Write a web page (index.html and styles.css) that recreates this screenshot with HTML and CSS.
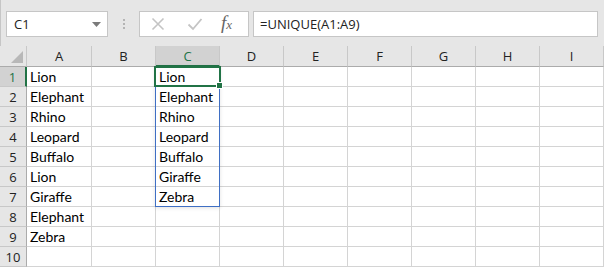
FILE: index.html
```html
<!DOCTYPE html>
<html lang="en">
<head>
    <meta charset="UTF-8">
    <title>UNIQUE function</title>
    <link rel="stylesheet" href="styles.css">
</head>
<body>
    <div class="toolbar">
        <div class="name-box">
            <span>C1</span>
            <svg class="caret" width="9" height="5" viewBox="0 0 9 5"><path d="M0 0h9L4.5 5z" fill="#7a7a7a"/></svg>
        </div>
        <div class="grip"><i></i><i></i><i></i></div>
        <div class="fx-buttons">
            <svg width="14" height="14" viewBox="0 0 14 14"><path d="M1.5 1.5l11 11M12.5 1.5l-11 11" stroke="#c4c4c4" stroke-width="1.6" fill="none"/></svg>
            <svg width="16" height="14" viewBox="0 0 16 14"><path d="M1.5 7.5l4.5 4.5L14.5 2" stroke="#c4c4c4" stroke-width="1.8" fill="none"/></svg>
            <span class="fx">f<small>x</small></span>
        </div>
        <div class="formula">=UNIQUE(A1:A9)</div>
    </div>

    <div class="sheet">
        <div class="grid">
            <div class="corner"></div>
            <div class="col-head">A</div>
            <div class="col-head">B</div>
            <div class="col-head active">C</div>
            <div class="col-head">D</div>
            <div class="col-head">E</div>
            <div class="col-head">F</div>
            <div class="col-head">G</div>
            <div class="col-head">H</div>
            <div class="col-head">I</div>
        </div>
        <div class="grid" id="rows"></div>
        <div class="spill"></div>
        <div class="selection"><span class="handle"></span></div>
    </div>

    <script>
        const colA = ["Lion", "Elephant", "Rhino", "Leopard", "Buffalo", "Lion", "Giraffe", "Elephant", "Zebra", ""];
        const colC = ["Lion", "Elephant", "Rhino", "Leopard", "Buffalo", "Giraffe", "Zebra", "", "", ""];
        const rows = document.getElementById('rows');

        for (let r = 0; r < 10; r++) {
            let html = '<div class="row-head' + (r === 0 ? ' active' : '') + '">' + (r + 1) + '</div>';
            for (let c = 0; c < 9; c++) {
                let text = '';
                if (c === 0) text = colA[r];
                if (c === 2) text = colC[r];
                html += '<div class="cell">' + text + '</div>';
            }
            rows.insertAdjacentHTML('beforeend', html);
        }
    </script>
</body>
</html>
```

FILE: styles.css
```css
body {
    margin: 0;
    background: #e6e6e6;
    font-family: 'Open Sans', sans-serif;
    overflow: hidden;
}

.toolbar {
    height: 46px;
    display: flex;
    align-items: flex-start;
    padding-top: 11px;
    box-sizing: border-box;
    border-left: 1px solid #c6c6c6;
}

.name-box {
    width: 102px;
    height: 26px;
    margin-left: 5px;
    background: white;
    border: 1px solid #c6c6c6;
    box-sizing: border-box;
    display: flex;
    align-items: center;
    justify-content: space-between;
    padding: 0 6px 0 7px;
    font-size: 13px;
    color: #222;
}

.caret {
    margin-top: 1px;
}

.grip {
    width: 31px;
    display: flex;
    flex-direction: column;
    align-items: center;
    gap: 2px;
    padding-top: 8px;
}

.grip i {
    width: 2px;
    height: 2px;
    background: #b4b4b4;
}

.fx-buttons {
    width: 110px;
    height: 26px;
    background: white;
    border: 1px solid #c6c6c6;
    box-sizing: border-box;
    display: flex;
    align-items: center;
    padding-left: 11px;
    gap: 22px;
}

.fx {
    font-family: 'Liberation Serif', serif;
    font-style: italic;
    font-size: 19px;
    color: #666;
    margin-left: -4px;
    margin-top: -3px;
}

.fx small {
    font-size: 13px;
}

.formula {
    flex: 1;
    height: 26px;
    margin: 0 6px 0 4px;
    background: white;
    border: 1px solid #c6c6c6;
    box-sizing: border-box;
    padding-left: 6px;
    font-size: 13px;
    line-height: 24px;
    color: #222;
}

.sheet {
    position: relative;
}

.grid {
    display: grid;
    grid-template-columns: 27px 65px repeat(8, 64px);
}

.corner,
.col-head {
    height: 21px;
    box-sizing: border-box;
    border-bottom: 1px solid #ababab;
    background: #e6e6e6;
}

.corner {
    position: relative;
    border-right: 1px solid #c8c8c8;
}

.corner::after {
    content: '';
    position: absolute;
    right: 3px;
    bottom: 3px;
    border-left: 12px solid transparent;
    border-bottom: 12px solid #b8b8b8;
}

.col-head {
    border-right: 1px solid #c8c8c8;
    text-align: center;
    font-size: 13px;
    line-height: 21px;
    color: #222;
}

.col-head.active {
    background: #d2d2d2;
    color: #217346;
    border-bottom: 2px solid #217346;
    line-height: 20px;
}

.row-head {
    height: 20px;
    box-sizing: border-box;
    background: #e6e6e6;
    border-right: 1px solid #ababab;
    border-bottom: 1px solid #c8c8c8;
    text-align: center;
    font-size: 13px;
    line-height: 20px;
    color: #222;
}

.row-head.active {
    background: #d2d2d2;
    color: #217346;
    border-right: 2px solid #217346;
}

.cell {
    height: 20px;
    box-sizing: border-box;
    background: white;
    border-right: 1px solid #d4d4d4;
    border-bottom: 1px solid #d4d4d4;
    padding-left: 3px;
    font-family: 'Lato', sans-serif;
    font-size: 14px;
    line-height: 20px;
    color: #000;
    white-space: nowrap;
}

.spill {
    position: absolute;
    left: 155px;
    top: 20px;
    width: 65px;
    height: 141px;
    box-sizing: border-box;
    border: 1px solid #3f6fc4;
    box-shadow: 0 1px 4px rgba(0, 0, 0, 0.12);
}

.selection {
    position: absolute;
    left: 154px;
    top: 20px;
    width: 67px;
    height: 21px;
    box-sizing: border-box;
    border: 2px solid #217346;
}

.handle {
    position: absolute;
    right: -4px;
    bottom: -4px;
    width: 5px;
    height: 5px;
    background: #217346;
    border: 1px solid white;
}
```
